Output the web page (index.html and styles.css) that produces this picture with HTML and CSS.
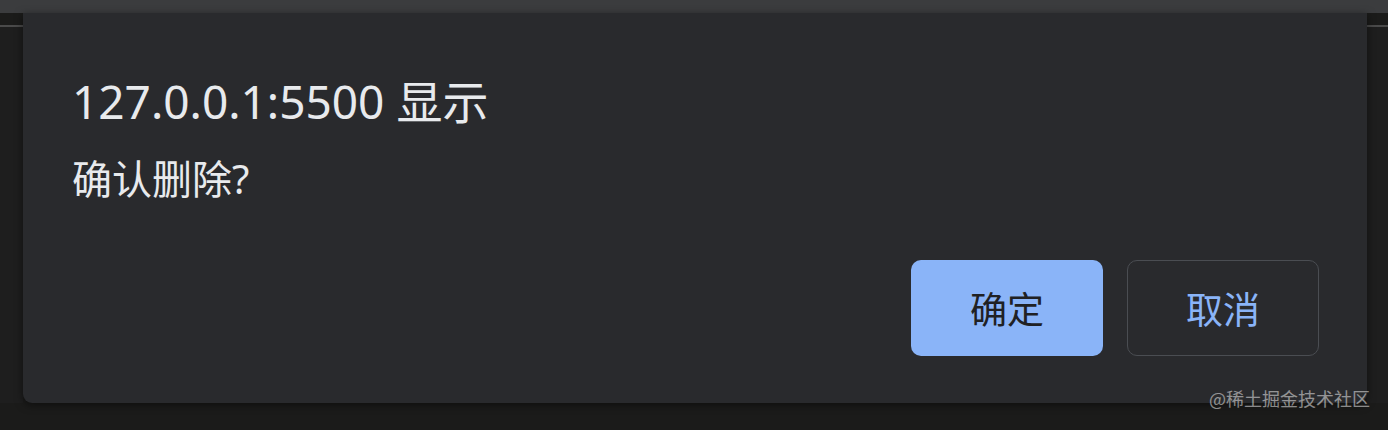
FILE: index.html
```html
<!DOCTYPE html>
<html lang="zh-CN">
<head>
<meta charset="utf-8">
<title>确认删除</title>
<link rel="stylesheet" href="styles.css">
</head>
<body>
<div class="topbar"></div>
<div class="stage">
  <div class="side side-left"></div>
  <div class="dialog" role="alertdialog">
    <div class="title">127.0.0.1:5500 显示</div>
    <div class="message">确认删除?</div>
    <div class="actions">
      <button class="btn btn-primary">确定</button>
      <button class="btn btn-secondary">取消</button>
    </div>
  </div>
  <div class="side side-right"></div>
</div>
<div class="watermark">@稀土掘金技术社区</div>
</body>
</html>
```
FILE: styles.css
```css
* { box-sizing: border-box; }
html, body {
  margin: 0;
  padding: 0;
  width: 1388px;
  height: 430px;
  overflow: hidden;
  background: #1b1b1a;
  font-family: "Noto Sans", "Noto Sans CJK SC", sans-serif;
}
.topbar {
  height: 13px;
  background: #3b3c3e;
}
.stage {
  display: flex;
  height: 390px;
}
.side {
  margin-top: 12px;
  border-top: 2px solid #4a4a4a;
  background: #1e1e1e;
}
.side-left { width: 23px; }
.side-right { flex: 1; }
.dialog {
  width: 1344px;
  height: 390px;
  background: #292a2d;
  border-radius: 0 0 9px 9px;
  box-shadow: 0 2px 8px rgba(0, 0, 0, 0.5);
  padding: 61px 48px 47px 49px;
  display: flex;
  flex-direction: column;
  color: #e8eaed;
  position: relative;
  z-index: 1;
}
.title {
  font-size: 46px;
  line-height: 54px;
}
.message {
  margin-top: 27px;
  font-size: 40px;
  line-height: 48px;
}
.actions {
  margin-top: auto;
  display: flex;
  justify-content: flex-end;
  gap: 24px;
}
.btn {
  width: 192px;
  height: 96px;
  border-radius: 10px;
  font-family: "Noto Sans CJK SC", sans-serif;
  font-size: 37px;
  display: flex;
  align-items: center;
  justify-content: center;
  padding: 0;
}
.btn-primary {
  background: #8ab4f8;
  color: #202124;
  border: none;
}
.btn-secondary {
  background: transparent;
  color: #8ab4f8;
  border: 1px solid #4a4d52;
}
.watermark {
  position: absolute;
  right: 18px;
  top: 386px;
  z-index: 2;
  font-family: "Noto Sans CJK SC", sans-serif;
  font-size: 18px;
  line-height: 24px;
  color: rgba(255, 255, 255, 0.5);
}
```
